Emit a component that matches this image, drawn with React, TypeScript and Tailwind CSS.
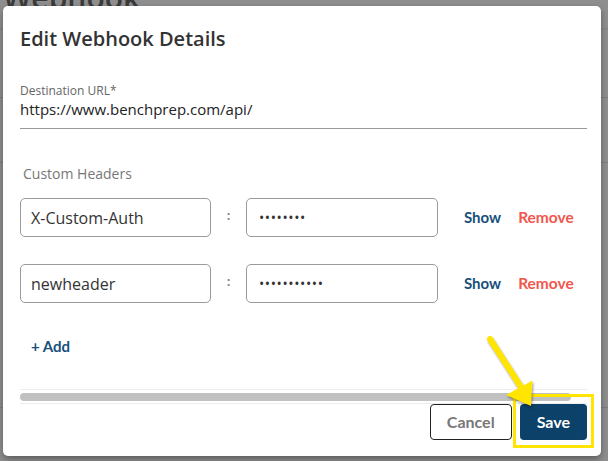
import React from 'react'

type HeaderRow = {
  name: string
  secret: string
}

const rows: HeaderRow[] = [
  { name: 'X-Custom-Auth', secret: '••••••••' },
  { name: 'newheader', secret: '•••••••••••' },
]

function HeaderField({ row }: { row: HeaderRow }) {
  return (
    <div className="flex items-center">
      <div className="flex h-[39px] w-[191px] items-center rounded-[5px] border border-[#9a9a9a] pl-[10px] text-[16px] text-[#333]">
        {row.name}
      </div>
      <div className="w-[35px] pb-[4px] text-center text-[13px] font-bold leading-none text-[#888]">:</div>
      <div className="flex h-[39px] w-[192px] items-center rounded-[5px] border border-[#9a9a9a] pl-[12px] text-[14px] tracking-[0.6px] text-[#333]">
        {row.secret}
      </div>
      <button className="ml-[26px] font-['Lato',sans-serif] text-[15px] font-bold text-[#17507b]">Show</button>
      <button className="ml-[17px] font-['Lato',sans-serif] text-[15.5px] font-bold text-[#f2564d]">Remove</button>
    </div>
  )
}

export default function App() {
  return (
    <div className="relative h-[461px] w-[608px] overflow-hidden bg-[#8e8e8e] font-['Open_Sans',sans-serif]">
      {/* page behind the overlay */}
      <div className="absolute left-[3px] top-[-25px] text-[30px] font-semibold text-[#3a3a3a]">Webhook</div>
      <div className="absolute left-0 top-[28px] h-[2px] w-full bg-[#868686]" />
      <div className="absolute left-0 top-[97px] h-px w-full bg-[#7e7e7e]" />
      <div className="absolute left-0 top-[162px] h-px w-full bg-[#7e7e7e]" />
      <div className="absolute left-0 top-[407px] h-px w-full bg-[#7e7e7e]" />

      {/* modal */}
      <div className="absolute left-[3px] top-[6px] h-[450px] w-[598px] rounded-[5px] bg-white pl-[17px] pr-[14px] pt-[19px] shadow-[0_3px_6px_rgba(0,0,0,0.35)]">
        <h2 className="text-[20px] font-semibold leading-[28px] text-[#333]">Edit Webhook Details</h2>

        <div className="mt-[31px] border-b border-[#999] pb-[8px]">
          <div className="text-[12px] leading-[14px] text-[#666]">Destination URL*</div>
          <div className="text-[15px] leading-[22px] text-[#222]">https://www.benchprep.com/api/</div>
        </div>

        <div className="mt-[35px] pl-[3px] text-[14px] leading-[20px] text-[#777]">Custom Headers</div>

        <div className="mt-[14px] flex flex-col gap-[27px]">
          {rows.map(row => (
            <HeaderField key={row.name} row={row} />
          ))}
        </div>

        <button className="mt-[33px] pl-[11px] font-['Lato',sans-serif] text-[15px] font-bold leading-[20px] text-[#17507b]">
          + Add
        </button>

        {/* horizontal scrollbar of the rows area */}
        <div className="mt-[31px] h-[15px] border-y border-[#ececec] pt-[3px]">
          <div className="h-[8px] w-[551px] rounded-full bg-[#c1c1c1]" />
        </div>

        <div className="flex justify-end gap-[8px]">
          <button className="h-[36px] rounded-[4px] border border-[#222] px-[16px] font-['Lato',sans-serif] text-[16px] font-bold text-[#777]">
            Cancel
          </button>
          <button className="h-[36px] rounded-[4px] bg-[#0c416a] px-[17px] font-['Lato',sans-serif] text-[16px] font-bold text-white">
            Save
          </button>
        </div>
      </div>

      {/* annotation */}
      <div className="absolute left-[513px] top-[394px] h-[54px] w-[81px] border-[3px] border-[#ffe500]" />
      <svg
        className="absolute left-0 top-0 drop-shadow-[1px_2px_1px_rgba(0,0,0,0.35)]"
        width="608"
        height="461"
        viewBox="0 0 608 461"
      >
        <line x1="490" y1="339" x2="521" y2="387" stroke="#ffe500" strokeWidth="6" strokeLinecap="round" />
        <polygon points="506,395 532.5,380.5 531,406" fill="#ffe500" />
      </svg>
    </div>
  )
}
